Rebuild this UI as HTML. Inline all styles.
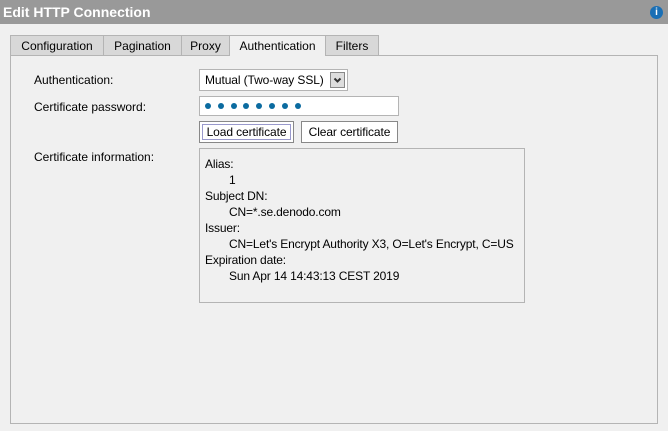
<!DOCTYPE html>
<html><head><style>
body{margin:0;width:668px;height:431px;background:#f0f0f0;font-family:"Liberation Sans",Arial,sans-serif;font-size:12px;color:#000;position:relative;overflow:hidden}
.a{position:absolute;white-space:nowrap}
.title{left:0;top:0;width:668px;height:24px;background:#999;color:#fff;font-weight:bold;font-size:14px;line-height:24px}
.tab{top:35px;height:20px;border:1px solid #b4b4b4;border-bottom:none;background:#d8d8d8;line-height:20px;text-align:center;box-sizing:border-box;font-size:12px}
.lbl{font-size:12px}
.box{background:#fff;border:1px solid #b4b4b4;box-sizing:border-box}
.btn{background:#fff;border:1px solid #888;box-sizing:border-box;line-height:20px;text-align:center;font-size:12px}
.dot{display:inline-block;width:6px;height:6px;border-radius:50%;background:#0b6ba0;margin-right:6.8px;vertical-align:top}
.info div{height:16px;line-height:16px}
</style></head><body>
<div class="a title"><span style="margin-left:3px">Edit HTTP Connection</span></div>
<div class="a" style="left:650px;top:6px;width:13px;height:13px;border-radius:50%;background:#1a6fb5;color:#fff;font-size:10px;font-weight:bold;text-align:center;line-height:13px">i</div>
<div class="a" style="left:10px;top:55px;width:648px;height:369px;border:1px solid #b4b4b4;box-sizing:border-box"></div>
<div class="a tab" style="left:10px;width:94px">Configuration</div>
<div class="a tab" style="left:103px;width:79px">Pagination</div>
<div class="a tab" style="left:181px;width:49px">Proxy</div>
<div class="a tab" style="left:229px;width:97px;height:21px;background:#f0f0f0">Authentication</div>
<div class="a tab" style="left:325px;width:54px">Filters</div>
<div class="a lbl" style="left:34px;top:73px">Authentication:</div>
<div class="a lbl" style="left:34px;top:100px">Certificate password:</div>
<div class="a lbl" style="left:34px;top:150px">Certificate information:</div>
<div class="a box" style="left:199px;top:69px;width:149px;height:22px;line-height:20px;padding-left:5px;font-size:12px;letter-spacing:-0.1px">Mutual (Two-way SSL)</div>
<div class="a" style="left:330px;top:72px;width:15px;height:16px;background:#ddd;border:1px solid #888;box-sizing:border-box"><svg width="13" height="14" style="position:absolute;left:0;top:0"><path d="M3.5 5.5 L6.5 8.5 L9.5 5.5" stroke="#333" stroke-width="2" fill="none"/></svg></div>
<div class="a box" style="left:199px;top:96px;width:200px;height:20px;padding:6px 0 0 5px"><span class="dot"></span><span class="dot"></span><span class="dot"></span><span class="dot"></span><span class="dot"></span><span class="dot"></span><span class="dot"></span><span class="dot"></span></div>
<div class="a btn" style="left:199px;top:121px;width:95px;height:22px;outline:1px solid #99c;outline-offset:-4px;letter-spacing:-0.1px">Load certificate</div>
<div class="a btn" style="left:301px;top:121px;width:97px;height:22px;letter-spacing:-0.1px">Clear certificate</div>
<div class="a info" style="left:199px;top:148px;width:326px;height:155px;border:1px solid #b4b4b4;box-sizing:border-box;padding:7px 0 0 5px;font-size:12px;letter-spacing:-0.15px">
<div>Alias:</div><div style="padding-left:24px">1</div>
<div>Subject DN:</div><div style="padding-left:24px">CN=*.se.denodo.com</div>
<div>Issuer:</div><div style="padding-left:24px">CN=Let's Encrypt Authority X3, O=Let's Encrypt, C=US</div>
<div>Expiration date:</div><div style="padding-left:24px">Sun Apr 14 14:43:13 CEST 2019</div>
</div>
</body></html>
